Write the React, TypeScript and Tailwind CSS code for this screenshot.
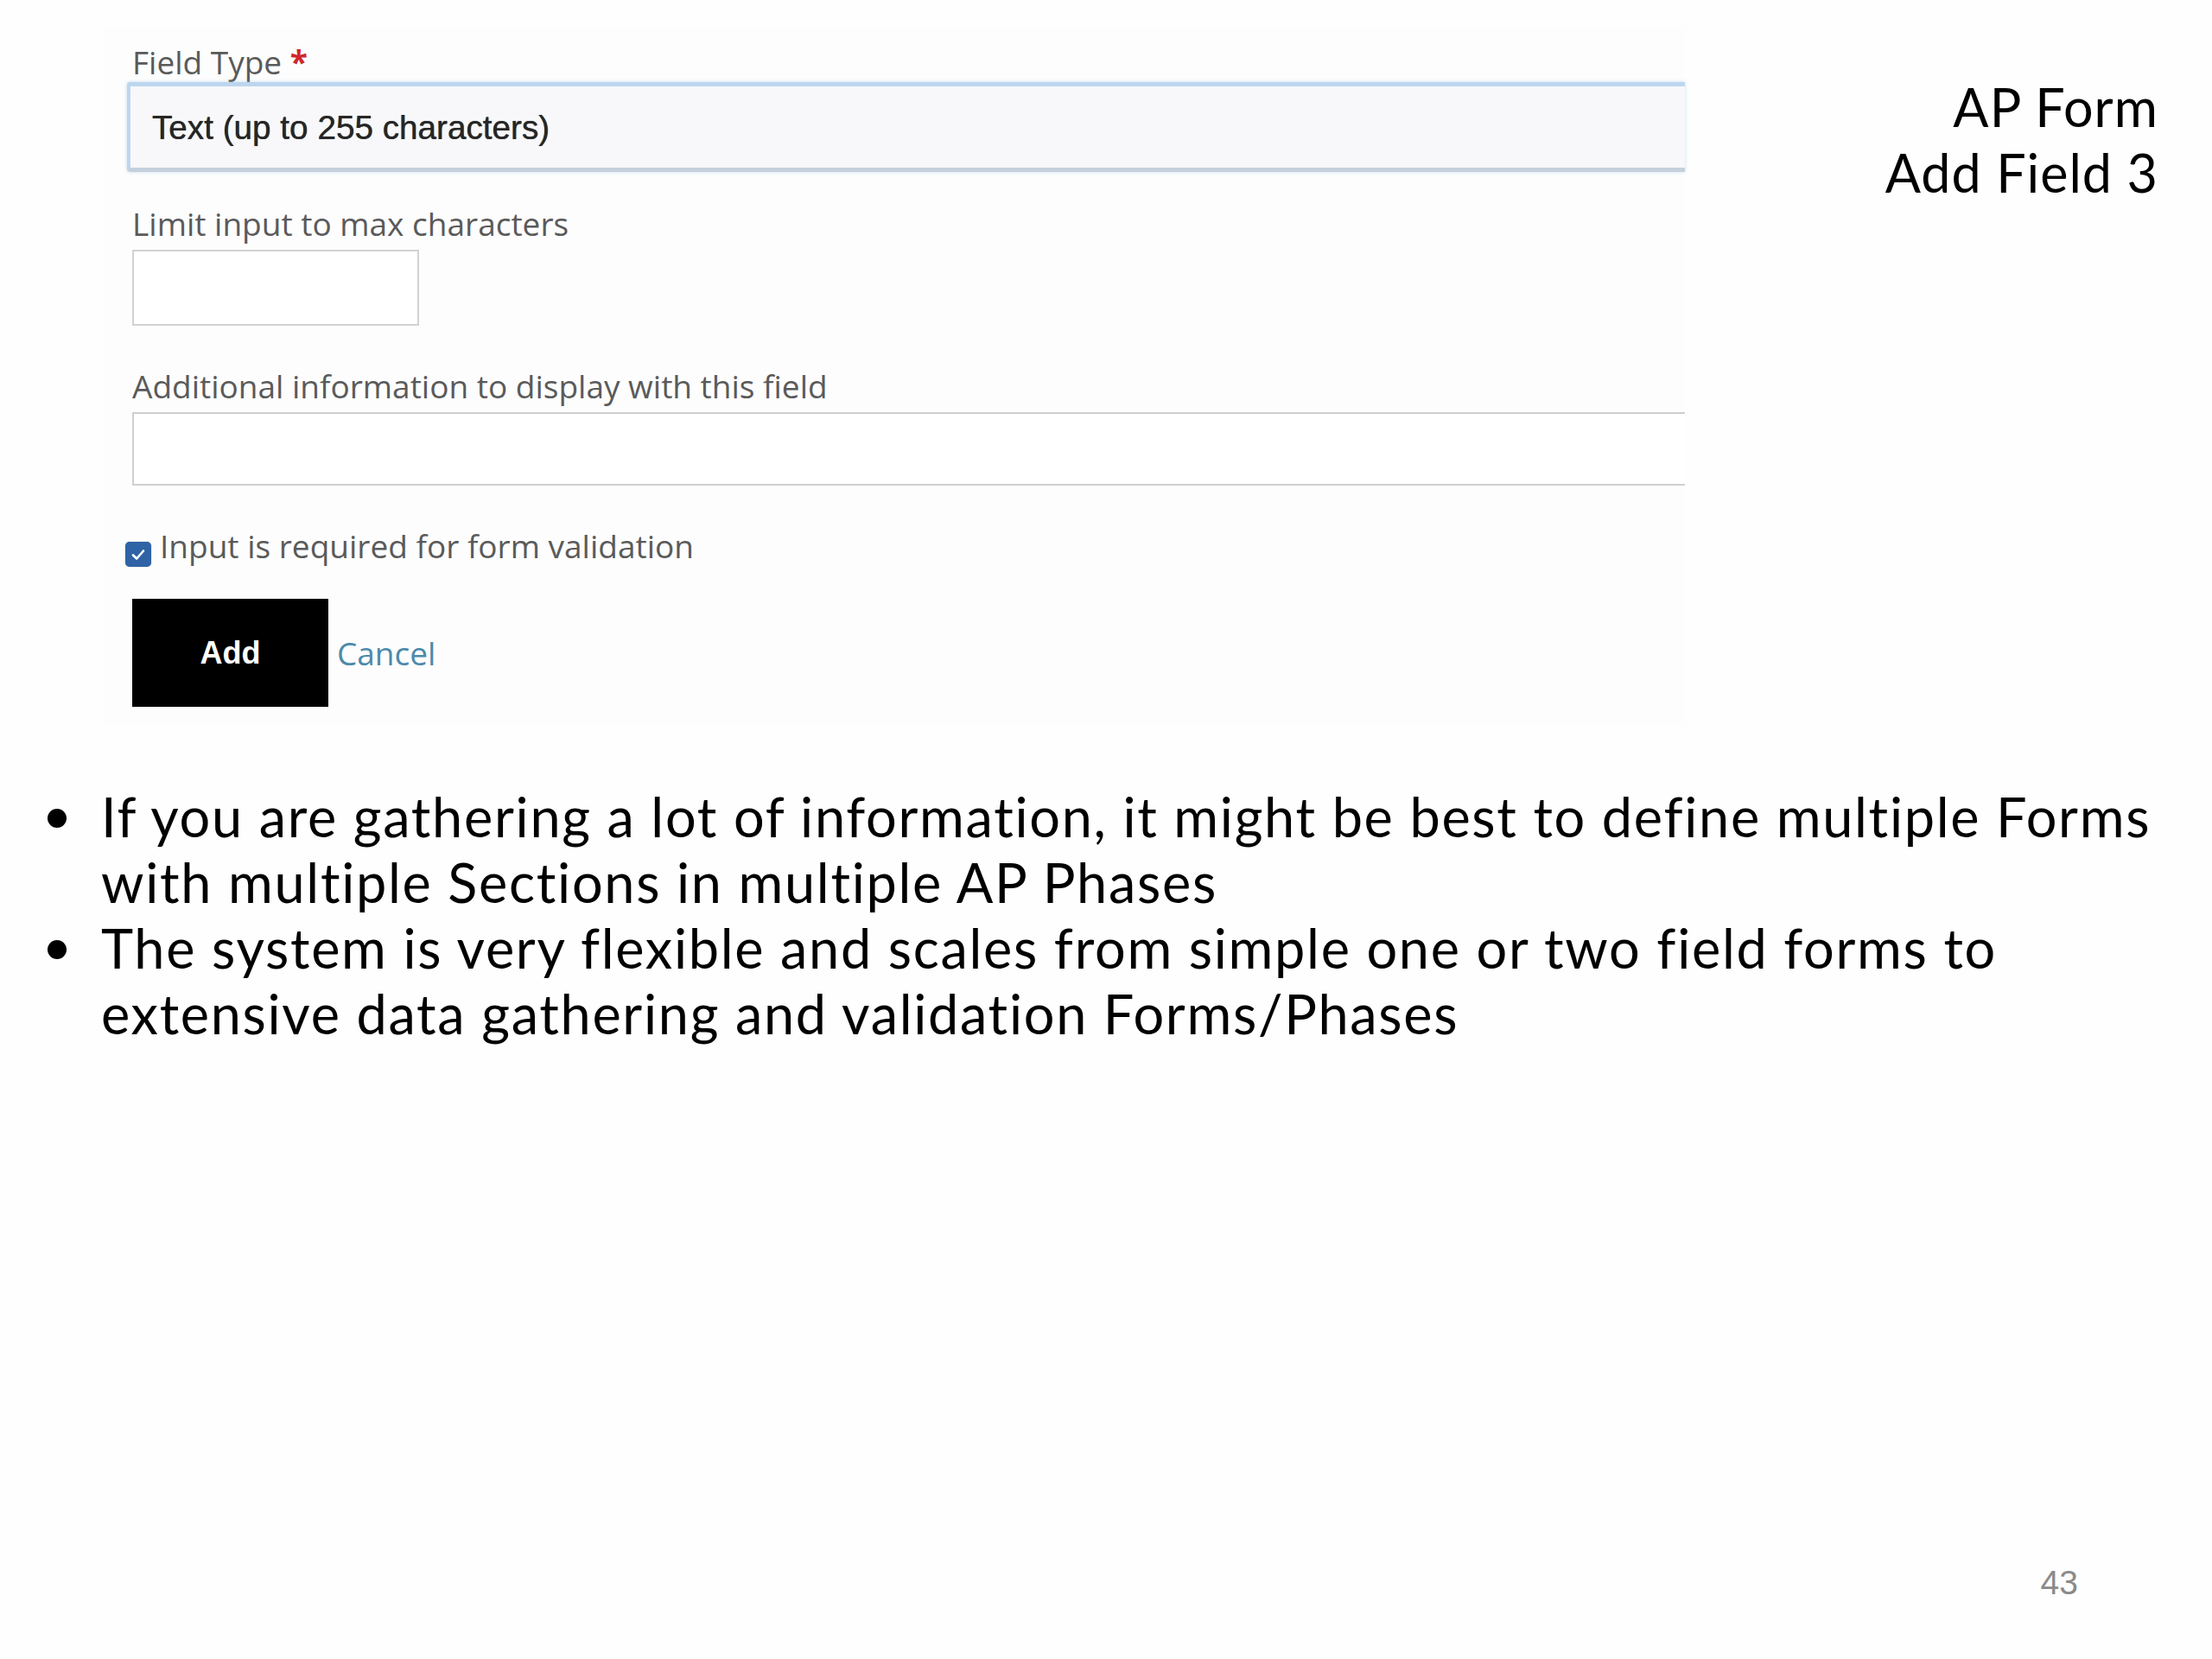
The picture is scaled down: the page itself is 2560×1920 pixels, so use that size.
import React from 'react';

// slide 43: screenshot of the "add field" form, title on the right, notes below
function CheckMark() {
    return (
        <svg viewBox="0 0 20 20" className="w-[20px] h-[20px]" fill="none">
            <path d="M4 10.5 L8.2 14.5 L16 5.5" stroke="white" strokeWidth="2.6" strokeLinecap="round" strokeLinejoin="round" />
        </svg>
    );
}

function FormShot() {
    return (
        <div className="ml-[120px] mt-[30px] w-[1830px] h-[810px] bg-[#fdfdfd] pl-[33px] pt-[20px] flex flex-col font-['Open_Sans',sans-serif] text-[37px] leading-[43px] text-[#5a5a5a]">
            {/* Field Type */}
            <label className="whitespace-nowrap">
                Field Type <span className="text-[#d0262b] font-bold">*</span>
            </label>
            <div className="-ml-[6px] mt-[2px] h-[104px] flex items-center pl-[25px] bg-[#f8f8fa] border-[5px] border-l-[4px] border-r-0 border-[#bdd6ee] border-b-[#c5d0dc] rounded-l-[4px] shadow-[0_0_4px_rgba(150,190,230,0.5)]">
                <span className="font-['Liberation_Sans',Arial,sans-serif] text-[38.7px] text-[#262626] [text-shadow:0_0_0.7px_#262626]">
                    Text (up to 255 characters)
                </span>
            </div>

            {/* Limit */}
            <label className="mt-[38px] whitespace-nowrap">Limit input to max characters</label>
            <div className="mt-[9px] w-[332px] h-[88px] bg-white border-2 border-[#d2d2d2]" />

            {/* Additional info */}
            <label className="mt-[48px] whitespace-nowrap">Additional information to display with this field</label>
            <div className="mt-[9px] h-[85px] bg-white border-2 border-r-0 border-[#cfcfcf]" />

            {/* Required */}
            <div className="mt-[48px] -ml-[8px] flex items-start">
                <div className="mt-[17px] w-[30px] h-[29px] rounded-[5px] bg-[#2f63a6] flex items-center justify-center shadow-[0_0_1px_rgba(0,0,0,0.5)]">
                    <CheckMark />
                </div>
                <span className="ml-[10px] whitespace-nowrap">Input is required for form validation</span>
            </div>

            {/* Actions */}
            <div className="mt-[37px] flex items-center">
                <button className="w-[227px] h-[125px] bg-black text-white font-['Liberation_Sans',Arial,sans-serif] font-bold text-[36px] flex items-center justify-center">
                    Add
                </button>
                <span className="ml-[10px] text-[#4c8aab]">Cancel</span>
            </div>
        </div>
    );
}

const bullets = [
    ['If you are gathering a lot of information, it might be best to define multiple Forms', 'with multiple Sections in multiple AP Phases'],
    ['The system is very flexible and scales from simple one or two field forms to', 'extensive data gathering and validation Forms/Phases'],
];

export default function App() {
    return (
        <div className="w-[2560px] h-[1920px] bg-[#fefefe] flex flex-col font-['Lato',sans-serif] text-black">
            <div className="flex justify-between items-start">
                <FormShot />
                <h1 className="pt-[86px] pr-[62px] text-right text-[61px] leading-[76px] tracking-[1px] whitespace-nowrap">
                    AP Form
                    <br />
                    Add Field 3
                </h1>
            </div>

            <ul className="mt-[67px] pl-[55px] text-[63px] leading-[76px] tracking-[1.7px]">
                {bullets.map((lines, i) => (
                    <li key={i} className="flex">
                        <span className="w-[62px] shrink-0 pt-[29px]">
                            <span className="block w-[22px] h-[22px] rounded-full bg-black" />
                        </span>
                        <p className="whitespace-nowrap">
                            {lines[0]}
                            <br />
                            {lines[1]}
                        </p>
                    </li>
                ))}
            </ul>

            <div className="mt-auto flex justify-end pr-[155px] pb-[69px] font-['Liberation_Sans',Arial,sans-serif] text-[39px] leading-none text-[#8a8a8a]">
                43
            </div>
        </div>
    );
}
